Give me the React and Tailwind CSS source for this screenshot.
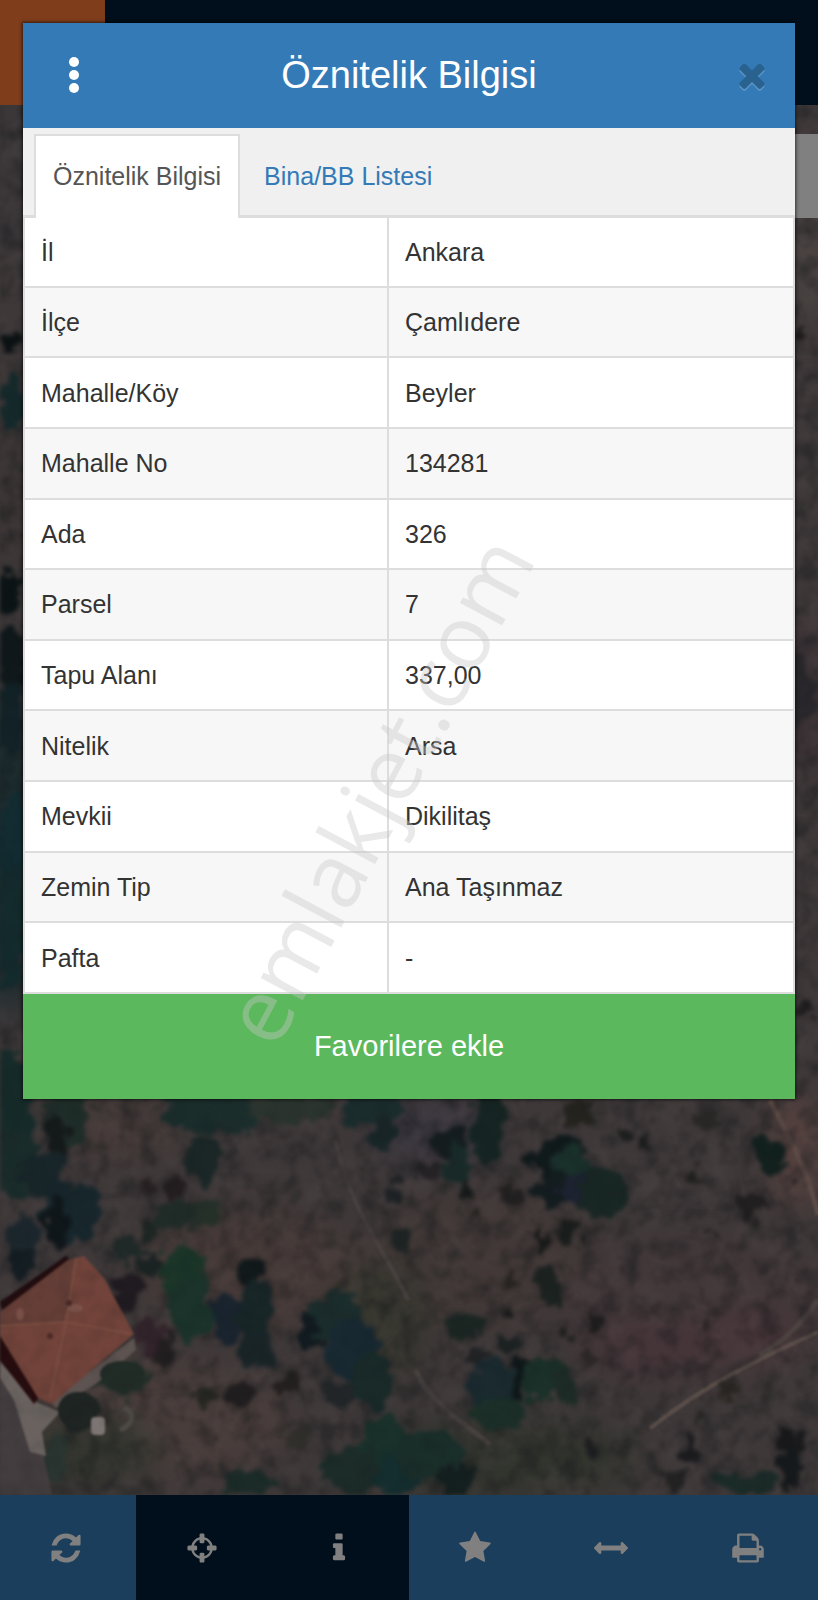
import React, { useState } from "react";

const rows = [
  { label: "İl", value: "Ankara" },
  { label: "İlçe", value: "Çamlıdere" },
  { label: "Mahalle/Köy", value: "Beyler" },
  { label: "Mahalle No", value: "134281" },
  { label: "Ada", value: "326" },
  { label: "Parsel", value: "7" },
  { label: "Tapu Alanı", value: "337,00" },
  { label: "Nitelik", value: "Arsa" },
  { label: "Mevkii", value: "Dikilitaş" },
  { label: "Zemin Tip", value: "Ana Taşınmaz" },
  { label: "Pafta", value: "-" },
];

const icons = {
  refresh:
    "M1639 1056q0 5-1 7-64 268-268 434.5t-478 166.5q-146 0-282.5-55t-243.5-157l-129 129q-19 19-45 19t-45-19-19-45v-448q0-26 19-45t45-19h448q26 0 45 19t19 45-19 45l-137 137q71 66 161 102t187 36q134 0 250-65t186-179q11-17 53-117 8-23 30-23h192q13 0 22.5 9.5t9.5 22.5zm25-800v448q0 26-19 45t-45 19h-448q-26 0-45-19t-19-45 19-45l138-138q-148-137-349-137-134 0-250 65t-186 179q-11 17-53 117-8 23-30 23h-199q-13 0-22.5-9.5t-9.5-22.5v-7q65-268 270-434.5t480-166.5q146 0 284 55.5t245 156.5l130-129q19-19 45-19t45 19 19 45z",
  crosshairs:
    "M1325 1024h-109q-26 0-45-19t-19-45v-128q0-26 19-45t45-19h109q-32-108-112.5-188.5t-188.5-112.5v109q0 26-19 45t-45 19h-128q-26 0-45-19t-19-45v-109q-108 32-188.5 112.5t-112.5 188.5h109q26 0 45 19t19 45v128q0 26-19 45t-45 19h-109q32 108 112.5 188.5t188.5 112.5v-109q0-26 19-45t45-19h128q26 0 45 19t19 45v109q108-32 188.5-112.5t112.5-188.5zm339-192v128q0 26-19 45t-45 19h-143q-37 161-154.5 278.5t-278.5 154.5v143q0 26-19 45t-45 19h-128q-26 0-45-19t-19-45v-143q-161-37-278.5-154.5t-154.5-278.5h-143q-26 0-45-19t-19-45v-128q0-26 19-45t45-19h143q37-161 154.5-278.5t278.5-154.5v-143q0-26 19-45t45-19h128q26 0 45 19t19 45v143q161 37 278.5 154.5t154.5 278.5h143q26 0 45 19t19 45z",
  info: "M1216 1344v128q0 26-19 45t-45 19h-512q-26 0-45-19t-19-45v-128q0-26 19-45t45-19h64v-384h-64q-26 0-45-19t-19-45v-128q0-26 19-45t45-19h384q26 0 45 19t19 45v576h64q26 0 45 19t19 45zm-128-1152v192q0 26-19 45t-45 19h-256q-26 0-45-19t-19-45v-192q0-26 19-45t45-19h256q26 0 45 19t19 45z",
  star: "M1728 647q0 22-26 48l-363 354 86 500q1 7 1 20 0 21-10.5 35.5t-30.5 14.5q-19 0-40-12l-449-236-449 236q-22 12-40 12-21 0-31.5-14.5t-10.5-35.5q0-6 2-20l86-500-364-354q-25-27-25-48 0-37 56-46l502-73 225-455q19-41 49-41t49 41l225 455 502 73q56 9 56 46z",
  arrows:
    "M1792 896q0 26-19 45l-256 256q-19 19-45 19t-45-19-19-45v-128h-1024v128q0 26-19 45t-45 19-45-19l-256-256q-19-19-19-45t19-45l256-256q19-19 45-19t45 19 19 45v128h1024v-128q0-26 19-45t45-19 45 19l256 256q19 19 19 45z",
  print:
    "M448 1536h896v-256h-896v256zm0-640h896v-384h-160q-40 0-68-28t-28-68v-160h-640v640zm1152 64q0-26-19-45t-45-19-45 19-19 45 19 45 45 19 45-19 19-45zm128 0v416q0 13-9.5 22.5t-22.5 9.5h-224v160q0 40-28 68t-68 28h-960q-40 0-68-28t-28-68v-160h-224q-13 0-22.5-9.5t-9.5-22.5v-416q0-79 56.5-135.5t135.5-56.5h64v-544q0-40 28-68t68-28h672q40 0 88 20t76 48l152 152q28 28 48 76t20 88v256h64q79 0 135.5 56.5t56.5 135.5z",
  times:
    "M1490 1322q0 40-28 68l-136 136q-28 28-68 28t-68-28l-294-294-294 294q-28 28-68 28t-68-28l-136-136q-28-28-28-68t28-68l294-294-294-294q-28-28-28-68t28-68l136-136q28-28 68-28t68 28l294 294 294-294q28-28 68-28t68 28l136 136q28 28 28 68t-28 68l-294 294 294 294q28 28 28 68z",
};

const tools = [
  { name: "Yenile", icon: icons.refresh, active: false },
  { name: "Konumum", icon: icons.crosshairs, active: true },
  { name: "Bilgi", icon: icons.info, active: true },
  { name: "Favoriler", icon: icons.star, active: false },
  { name: "Ölçüm", icon: icons.arrows, active: false },
  { name: "Yazdır", icon: icons.print, active: false },
];

// ground patches: x, y, rx, ry, color
const patches = [
  [10, 180, 30, 90, "#3a3638"],
  [10, 470, 30, 100, "#3b3535"],
  [10, 850, 26, 170, "#15282b"],
  [808, 250, 20, 80, "#4a4342"],
  [808, 700, 20, 90, "#3a3034"],
  [250, 1270, 110, 60, "#463a38"],
  [160, 1420, 130, 60, "#493d3b"],
  [480, 1260, 120, 70, "#413837"],
  [700, 1310, 140, 70, "#423739"],
  [650, 1350, 60, 24, "#463439"],
  [750, 1335, 50, 16, "#4b353a"],
  [90, 1450, 70, 35, "#33352e"],
  [500, 1460, 140, 40, "#32342e"],
  [380, 1320, 50, 60, "#37362f"],
  [430, 1130, 60, 30, "#3c3840"],
  [795, 1150, 24, 60, "#57423f"],
  [120, 1130, 60, 30, "#463b39"],
];

// tree crowns, same order of fields
const trees = [
  [10, 340, 12, 10, "#0c1213"],
  [14, 400, 14, 30, "#15292b"],
  [8, 590, 12, 20, "#0b1416"],
  [12, 660, 16, 34, "#10181b"],
  [10, 720, 16, 40, "#122226"],
  [12, 840, 18, 50, "#122c31"],
  [10, 930, 16, 60, "#142b2d"],
  [802, 335, 7, 6, "#1c191a"],
  [800, 690, 16, 34, "#29272b"],
  [806, 1010, 9, 6, "#1e1c1d"],
  [8, 1110, 26, 62, "#162b29"],
  [16, 1165, 24, 34, "#1a2c2a"],
  [68, 1120, 22, 30, "#1f2d29"],
  [58, 1140, 12, 18, "#151a1a"],
  [42, 1175, 24, 22, "#182529"],
  [72, 1212, 30, 30, "#17272c"],
  [56, 1225, 12, 26, "#10171a"],
  [26, 1240, 16, 24, "#1c272d"],
  [22, 1262, 18, 14, "#141d22"],
  [200, 1110, 40, 24, "#1a2d2b"],
  [235, 1115, 28, 20, "#1c2e2c"],
  [205, 1160, 18, 22, "#1a2726"],
  [290, 1108, 46, 14, "#2b342f"],
  [372, 1108, 30, 22, "#1b2c2d"],
  [384, 1135, 14, 20, "#192628"],
  [175, 1188, 12, 12, "#231e20"],
  [148, 1187, 7, 6, "#272123"],
  [180, 1215, 24, 14, "#202c28"],
  [208, 1212, 14, 14, "#253029"],
  [152, 1230, 12, 11, "#1e2623"],
  [128, 1250, 18, 12, "#202a28"],
  [150, 1266, 14, 10, "#1c2424"],
  [182, 1275, 20, 34, "#1b3529"],
  [190, 1310, 22, 30, "#1b332b"],
  [126, 1292, 17, 20, "#201b20"],
  [152, 1335, 15, 19, "#33242b"],
  [166, 1352, 12, 16, "#231f20"],
  [254, 1275, 14, 14, "#12191b"],
  [228, 1318, 17, 24, "#19242e"],
  [256, 1310, 20, 32, "#182628"],
  [258, 1350, 16, 20, "#1a2528"],
  [206, 1396, 11, 10, "#262722"],
  [240, 1396, 16, 13, "#211e20"],
  [288, 1385, 12, 9, "#23201f"],
  [310, 1332, 12, 17, "#121b20"],
  [336, 1318, 24, 26, "#1b2d2c"],
  [350, 1350, 28, 30, "#182932"],
  [372, 1380, 22, 26, "#192a29"],
  [340, 1395, 20, 14, "#222628"],
  [386, 1440, 24, 24, "#19312a"],
  [350, 1470, 28, 24, "#1c2c28"],
  [400, 1475, 26, 22, "#142d2e"],
  [250, 1482, 28, 12, "#1b2b28"],
  [298, 1438, 14, 14, "#312f2c"],
  [120, 1378, 28, 16, "#222e28"],
  [78, 1410, 20, 20, "#1e2423"],
  [55, 1460, 16, 20, "#2a3430"],
  [397, 1195, 7, 14, "#1f2225"],
  [402, 1240, 6, 16, "#1e2424"],
  [438, 1150, 8, 6, "#2a292c"],
  [450, 1142, 17, 15, "#151d1f"],
  [460, 1165, 14, 20, "#192b29"],
  [488, 1128, 17, 38, "#162523"],
  [428, 1172, 18, 9, "#242225"],
  [465, 1188, 5, 9, "#171a1b"],
  [515, 1196, 14, 8, "#232021"],
  [480, 1212, 6, 5, "#2a2523"],
  [580, 1115, 16, 13, "#25241f"],
  [560, 1160, 28, 23, "#111a1b"],
  [572, 1170, 20, 24, "#1a302b"],
  [552, 1190, 18, 22, "#141d1f"],
  [575, 1190, 16, 12, "#1c2230"],
  [602, 1192, 22, 25, "#192724"],
  [626, 1137, 7, 10, "#1d1f1f"],
  [646, 1144, 5, 9, "#1a1b1b"],
  [708, 1118, 11, 9, "#2a2826"],
  [694, 1176, 9, 10, "#222121"],
  [769, 1155, 18, 20, "#12201e"],
  [752, 1205, 16, 13, "#221f20"],
  [791, 1185, 4, 4, "#1c1c1d"],
  [541, 1233, 5, 10, "#101313"],
  [543, 1248, 5, 6, "#141717"],
  [565, 1230, 10, 11, "#1a1e1c"],
  [590, 1236, 4, 5, "#181a1a"],
  [548, 1285, 13, 22, "#1b2220"],
  [514, 1279, 5, 8, "#25221f"],
  [507, 1314, 4, 9, "#1a1b1b"],
  [595, 1322, 5, 11, "#1f1d1e"],
  [465, 1327, 20, 15, "#1b2623"],
  [508, 1342, 12, 11, "#1d2223"],
  [478, 1356, 10, 9, "#202224"],
  [568, 1337, 6, 5, "#222020"],
  [590, 1360, 9, 9, "#2c2727"],
  [492, 1385, 26, 24, "#1a2a2f"],
  [520, 1380, 10, 24, "#0f1718"],
  [542, 1378, 18, 26, "#1b3129"],
  [566, 1385, 14, 20, "#1e2c27"],
  [500, 1412, 32, 14, "#1c2f28"],
  [706, 1327, 4, 6, "#251f20"],
  [730, 1392, 13, 8, "#2a2722"],
  [700, 1418, 6, 6, "#282525"],
  [690, 1450, 6, 14, "#1c1c1e"],
  [592, 1448, 5, 8, "#1d1d20"],
  [430, 1455, 34, 24, "#1a2e2a"],
  [455, 1480, 20, 16, "#141f1f"],
  [676, 1478, 12, 10, "#222223"],
  [784, 1440, 8, 12, "#18181a"],
  [800, 1442, 9, 14, "#1b1b1d"],
  [790, 1468, 12, 20, "#16191b"],
  [745, 1485, 30, 12, "#1b2b28"],
  [796, 1278, 4, 5, "#221d1e"],
  [713, 1234, 4, 3, "#221f1f"],
];

function Terrain() {
  return (
    <svg
      className="absolute inset-0 h-full w-full"
      viewBox="0 105 818 1390"
      preserveAspectRatio="xMidYMin slice"
      aria-hidden="true"
    >
      <defs>
        <filter id="ground" x="-30%" y="-30%" width="160%" height="160%" colorInterpolationFilters="sRGB">
          <feGaussianBlur stdDeviation="16" />
        </filter>
        <filter
          id="crowns"
          x="0"
          y="105"
          width="818"
          height="1390"
          filterUnits="userSpaceOnUse"
          colorInterpolationFilters="sRGB"
        >
          <feTurbulence type="fractalNoise" baseFrequency="0.06" numOctaves="3" seed="4" result="n" />
          <feDisplacementMap in="SourceGraphic" in2="n" scale="28" xChannelSelector="R" yChannelSelector="G" />
          <feGaussianBlur stdDeviation="2" />
        </filter>
        <filter id="roof" x="-10%" y="-10%" width="120%" height="120%" colorInterpolationFilters="sRGB">
          <feGaussianBlur stdDeviation="1" />
        </filter>
        <filter id="dark" x="0" y="0" width="100%" height="100%" colorInterpolationFilters="sRGB">
          <feTurbulence type="fractalNoise" baseFrequency="0.05" numOctaves="3" seed="9" />
          <feColorMatrix values="0 0 0 0 0.05  0 0 0 0 0.07  0 0 0 0 0.08  2.4 0 0 0 -1.05" />
          <feGaussianBlur stdDeviation="1" />
        </filter>
        <filter id="light" x="0" y="0" width="100%" height="100%" colorInterpolationFilters="sRGB">
          <feTurbulence type="fractalNoise" baseFrequency="0.03" numOctaves="3" seed="21" />
          <feColorMatrix values="0 0 0 0 0.42  0 0 0 0 0.38  0 0 0 0 0.36  1.8 0 0 0 -0.8" />
          <feGaussianBlur stdDeviation="1" />
        </filter>
      </defs>
      <rect y="105" width="818" height="1390" fill="#3e3839" />
      <g filter="url(#ground)">
        {patches.map(([x, y, rx, ry, fill], i) => (
          <ellipse key={i} cx={x} cy={y} rx={rx} ry={ry} fill={fill} />
        ))}
      </g>
      <rect y="105" width="818" height="1390" filter="url(#light)" opacity="0.2" />
      <g fill="none" filter="url(#roof)">
        <path d="M818 1332 C760 1358 705 1385 650 1428" stroke="#5b4f4a" strokeWidth="4" />
        <path d="M818 1300 C800 1325 785 1340 760 1355" stroke="#4c4341" strokeWidth="5" />
        <path d="M770 1100 C790 1140 808 1170 818 1215" stroke="#5c4a46" strokeWidth="5" />
        <path d="M335 1140 C350 1210 385 1250 408 1300" stroke="#474140" strokeWidth="4" />
        <path d="M415 1370 C440 1415 470 1425 490 1445" stroke="#474140" strokeWidth="5" />
      </g>
      <rect y="105" width="818" height="1390" filter="url(#dark)" opacity="0.3" />
      <g filter="url(#crowns)">
        {trees.map(([x, y, rx, ry, fill], i) => (
          <ellipse key={i} cx={x} cy={y} rx={rx} ry={ry} fill={fill} />
        ))}
      </g>
      <g filter="url(#roof)">
        <path d="M0 1368 L14 1390 L42 1447 L52 1495 L0 1495 Z" fill="#433d3f" />
        <path d="M0 1362 L36 1402 L60 1412 L42 1432 L46 1456 L30 1452 L14 1400 L0 1378 Z" fill="#69625f" />
        <path d="M134 1338 L136 1350 L96 1384 L56 1408 L50 1402 Z" fill="#5d5350" />
        <path d="M0 1302 L66 1256 L72 1262 L4 1316 Z" fill="#220d10" />
        <path d="M0 1334 L40 1396 L34 1404 L0 1360 Z" fill="#260c0e" />
        <path d="M0 1312 L68 1260 L84 1256 L104 1278 L134 1334 L96 1366 L52 1404 L38 1398 L0 1336 Z" fill="#71433a" />
        <path d="M0 1312 L68 1260 L76 1258 L64 1322 L0 1328 Z" fill="#643e37" />
        <path d="M76 1258 L66 1322 L132 1334" fill="none" stroke="#7c4e41" strokeWidth="2" />
        <path d="M0 1326 L66 1322 L50 1398" fill="none" stroke="#7c4e41" strokeWidth="2" />
        <ellipse cx="20" cy="1314" rx="4" ry="6" fill="#7c5248" />
        <ellipse cx="75" cy="1308" rx="8" ry="4" fill="#7e544a" />
        <circle cx="69" cy="1303" r="3" fill="#4b2a26" />
        <circle cx="50" cy="1336" r="3" fill="#4d2b26" />
        <ellipse cx="122" cy="1374" rx="22" ry="13" fill="#222c27" />
        <ellipse cx="78" cy="1410" rx="20" ry="18" fill="#1f2523" />
        <rect x="91" y="1417" width="14" height="18" rx="4" fill="#7d7573" />
        <path d="M124 1408 C136 1412 134 1424 120 1430" fill="none" stroke="#4c4a44" strokeWidth="5" />
      </g>
      <rect y="105" width="818" height="1390" filter="url(#dark)" opacity="0.12" />
    </svg>
  );
}

function Icon({ path, className }) {
  return (
    <svg viewBox="0 0 1792 1792" className={className} fill="currentColor" aria-hidden="true">
      <path d={path} />
    </svg>
  );
}

function App() {
  const [tab, setTab] = useState("info");

  const tabClass = (name) =>
    tab === name
      ? "-mb-[3px] border-2 border-b-0 border-[#dddddd] bg-white px-[17px] text-[#555555]"
      : "-mb-[3px] border-2 border-b-0 border-transparent px-[22px] text-[#337ab7]";

  return (
    <div className="relative flex min-h-screen flex-col overflow-hidden bg-[#000f1b] font-['Liberation_Sans',Arial,sans-serif]">
      <header className="h-[105px] bg-[#000f1b]">
        <div className="h-full w-[105px] bg-[#7f3d1c]" />
      </header>

      <main className="relative flex flex-1 flex-col items-end pt-[29px]">
        <Terrain />
        <div className="relative h-[84px] w-24 bg-[#808080]" />
      </main>

      <nav className="grid h-[105px] grid-cols-6 bg-[#1b3e5c]">
        {tools.map((tool) => (
          <button
            key={tool.name}
            type="button"
            aria-label={tool.name}
            className={`flex items-center justify-center pr-1 text-[#808080] ${
              tool.active ? "bg-[#000f1b]" : "bg-[#1b3e5c]"
            }`}
          >
            <Icon path={tool.icon} className="size-[34px]" />
          </button>
        ))}
      </nav>

      <section
        role="dialog"
        aria-labelledby="dialog-title"
        className="absolute inset-x-[23px] top-[23px] bg-white shadow-[0_0_3px_1px_rgba(0,0,0,0.6)]"
      >
        <div className="flex h-[105px] items-center justify-between bg-[#337ab7] px-4 pb-[2px] text-white">
          <button type="button" aria-label="Menü" className="flex h-[52px] w-[70px] items-center justify-center">
            <svg viewBox="0 0 10 36" className="h-9 w-[10px]" fill="currentColor" aria-hidden="true">
              <circle cx="5" cy="5" r="5" />
              <circle cx="5" cy="18" r="5" />
              <circle cx="5" cy="31" r="5" />
            </svg>
          </button>
          <h1 id="dialog-title" className="text-[38px] leading-[52px]">
            Öznitelik Bilgisi
          </h1>
          <button
            type="button"
            aria-label="Kapat"
            className="flex h-[52px] w-[70px] items-center justify-end pr-2 text-[#29628f]"
          >
            <Icon path={icons.times} className="size-[38px] drop-shadow-[0_2px_0_rgba(255,255,255,0.2)]" />
          </button>
        </div>

        <div
          role="tablist"
          className="flex h-[90px] items-stretch border-b-[3px] border-[#dddddd] bg-[#f0f0f0] px-[11px] pt-[6px] text-[25px]"
        >
          <button
            type="button"
            role="tab"
            aria-selected={tab === "info"}
            className={tabClass("info")}
            onClick={() => setTab("info")}
          >
            Öznitelik Bilgisi
          </button>
          <button
            type="button"
            role="tab"
            aria-selected={tab === "list"}
            className={tabClass("list")}
            onClick={() => setTab("list")}
          >
            Bina/BB Listesi
          </button>
        </div>

        <table className="h-[776px] w-full table-fixed border-collapse border-x-2 border-[#dddddd] text-left text-[25px] leading-9 text-[#333333]">
          <tbody>
            {rows.map((row) => (
              <tr key={row.label} className="border-b-2 border-[#dddddd] odd:bg-white even:bg-[#f7f7f7]">
                <th scope="row" className="w-[364px] border-r-2 border-[#dddddd] px-4 font-normal">
                  {row.label}
                </th>
                <td className="px-4">{row.value}</td>
              </tr>
            ))}
          </tbody>
        </table>

        <button type="button" className="block h-[105px] w-full bg-[#5cb85c] text-[29px] text-white">
          Favorilere ekle
        </button>
      </section>

      <p className="pointer-events-none absolute top-[789px] left-[46%] -translate-x-1/2 -translate-y-1/2 -rotate-[62deg] font-['Open_Sans',sans-serif] text-[89px] leading-none whitespace-nowrap text-[#c8c8c8]/40">
        emlakjet.com
      </p>
    </div>
  );
}

export default App;
